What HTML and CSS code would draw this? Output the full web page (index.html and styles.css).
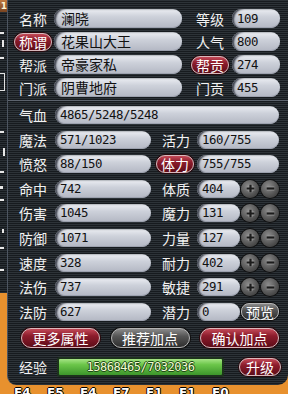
FILE: index.html
```html
<!DOCTYPE html>
<html lang="zh">
<head>
<meta charset="utf-8">
<title>人物属性</title>
<link rel="stylesheet" href="styles.css">
</head>
<body>
<div class="screen">
  <div class="side">
    <span class="side-icon">1</span>
    <i class="mk mk-a"></i>
    <i class="mk mk-b"></i>
    <i class="mk mk-c"></i>
    <i class="mk mk-box"></i>
    <i class="mk mk-d"></i>
    <i class="mk mk-e"></i>
    <i class="mk mk-f"></i>
    <i class="mk mk-g"></i>
    <i class="mk mk-h"></i>
    <i class="mk mk-i"></i>
    <i class="mk mk-j"></i>
    <i class="mk mk-k"></i>
  </div>

  <div class="panel">
    <div class="top">
      <div class="row">
        <span class="lbl">名称</span>
        <span class="fld fld-main">澜晓</span>
        <span class="lbl lbl-top2">等级</span>
        <span class="fld num fld-side">109</span>
      </div>
      <div class="row">
        <span class="lbl"><span class="btn red btn-lbl">称谓</span></span>
        <span class="fld fld-main">花果山大王</span>
        <span class="lbl lbl-top2">人气</span>
        <span class="fld num fld-side">800</span>
      </div>
      <div class="row">
        <span class="lbl">帮派</span>
        <span class="fld fld-main">帝豪家私</span>
        <span class="lbl lbl-top2"><span class="btn red btn-lbl">帮贡</span></span>
        <span class="fld num fld-side">274</span>
      </div>
      <div class="row">
        <span class="lbl">门派</span>
        <span class="fld fld-main">阴曹地府</span>
        <span class="lbl lbl-top2">门贡</span>
        <span class="fld num fld-side">455</span>
      </div>
    </div>

    <div class="divider"></div>

    <div class="stats">
      <div class="row">
        <span class="lbl">气血</span>
        <span class="fld num fld-wide">4865/5248/5248</span>
      </div>
      <div class="row">
        <span class="lbl">魔法</span>
        <span class="fld num fld-left">571/1023</span>
        <span class="lbl lbl-mid2">活力</span>
        <span class="fld num fld-right">160/755</span>
      </div>
      <div class="row">
        <span class="lbl">愤怒</span>
        <span class="fld num fld-left">88/150</span>
        <span class="lbl lbl-mid2 lbl-btn"><span class="btn red btn-lbl">体力</span></span>
        <span class="fld num fld-right">755/755</span>
      </div>
      <div class="row">
        <span class="lbl">命中</span>
        <span class="fld num fld-left">742</span>
        <span class="lbl lbl-mid2">体质</span>
        <span class="fld num fld-short">404</span>
        <span class="pm pm-first"><svg viewBox="0 0 10 10"><path class="pm-hi" d="M5 1.5v7M1.5 5h7"/><path class="pm-sym" d="M5 1.5v7M1.5 5h7"/></svg></span>
        <span class="pm"><svg viewBox="0 0 10 10"><path class="pm-hi" d="M1.5 5h7"/><path class="pm-sym" d="M1.5 5h7"/></svg></span>
      </div>
      <div class="row">
        <span class="lbl">伤害</span>
        <span class="fld num fld-left">1045</span>
        <span class="lbl lbl-mid2">魔力</span>
        <span class="fld num fld-short">131</span>
        <span class="pm pm-first"><svg viewBox="0 0 10 10"><path class="pm-hi" d="M5 1.5v7M1.5 5h7"/><path class="pm-sym" d="M5 1.5v7M1.5 5h7"/></svg></span>
        <span class="pm"><svg viewBox="0 0 10 10"><path class="pm-hi" d="M1.5 5h7"/><path class="pm-sym" d="M1.5 5h7"/></svg></span>
      </div>
      <div class="row">
        <span class="lbl">防御</span>
        <span class="fld num fld-left">1071</span>
        <span class="lbl lbl-mid2">力量</span>
        <span class="fld num fld-short">127</span>
        <span class="pm pm-first"><svg viewBox="0 0 10 10"><path class="pm-hi" d="M5 1.5v7M1.5 5h7"/><path class="pm-sym" d="M5 1.5v7M1.5 5h7"/></svg></span>
        <span class="pm"><svg viewBox="0 0 10 10"><path class="pm-hi" d="M1.5 5h7"/><path class="pm-sym" d="M1.5 5h7"/></svg></span>
      </div>
      <div class="row">
        <span class="lbl">速度</span>
        <span class="fld num fld-left">328</span>
        <span class="lbl lbl-mid2">耐力</span>
        <span class="fld num fld-short">402</span>
        <span class="pm pm-first"><svg viewBox="0 0 10 10"><path class="pm-hi" d="M5 1.5v7M1.5 5h7"/><path class="pm-sym" d="M5 1.5v7M1.5 5h7"/></svg></span>
        <span class="pm"><svg viewBox="0 0 10 10"><path class="pm-hi" d="M1.5 5h7"/><path class="pm-sym" d="M1.5 5h7"/></svg></span>
      </div>
      <div class="row">
        <span class="lbl">法伤</span>
        <span class="fld num fld-left">737</span>
        <span class="lbl lbl-mid2">敏捷</span>
        <span class="fld num fld-short">291</span>
        <span class="pm pm-first"><svg viewBox="0 0 10 10"><path class="pm-hi" d="M5 1.5v7M1.5 5h7"/><path class="pm-sym" d="M5 1.5v7M1.5 5h7"/></svg></span>
        <span class="pm"><svg viewBox="0 0 10 10"><path class="pm-hi" d="M1.5 5h7"/><path class="pm-sym" d="M1.5 5h7"/></svg></span>
      </div>
      <div class="row">
        <span class="lbl">法防</span>
        <span class="fld num fld-left">627</span>
        <span class="lbl lbl-mid2">潜力</span>
        <span class="fld num fld-short">0</span>
        <span class="btn grey btn-preview">预览</span>
      </div>
    </div>

    <div class="actions">
      <span class="btn red btn-act">更多属性</span>
      <span class="btn grey btn-act">推荐加点</span>
      <span class="btn red btn-act">确认加点</span>
    </div>

    <div class="exp">
      <span class="lbl">经验</span>
      <span class="bar">15868465/7032036</span>
      <span class="btn red btn-up">升级</span>
    </div>
  </div>

  <div class="hotkeys">
    <span>F4</span><span>F5</span><span>F4</span><span>F7</span><span>F1</span><span>F1</span><span>F0</span>
  </div>
</div>
</body>
</html>
```

FILE: styles.css
```css
* {
  box-sizing: border-box;
  margin: 0;
  padding: 0;
}

html, body {
  width: 288px;
  height: 394px;
  overflow: hidden;
}

body {
  background: #e8912e;
  font-family: "Noto Sans CJK SC", "Noto Sans", sans-serif;
}

.screen {
  display: grid;
  grid-template-columns: 7px 281px;
  grid-template-rows: 385px 9px;
}

/* left strip: piece of another window behind */
.side {
  grid-column: 1;
  grid-row: 1;
  height: 293px;
  background: linear-gradient(180deg, #2a3035 50%, #15191d 50%) 0 0 / 100% 2px repeat;
  display: flex;
  flex-direction: column;
  align-items: flex-start;
}

.side-icon {
  width: 7px;
  height: 12px;
  background: linear-gradient(#c07a40, #7a4420);
  color: #fff3d0;
  font: bold 9px/12px "DejaVu Sans", sans-serif;
  text-align: right;
  overflow: hidden;
}

.mk {
  display: block;
  background: #e8e8e8;
}
.mk-a { margin-top: 20px; width: 4px; height: 2px; }
.mk-b { margin-top: 6px; width: 2px; height: 7px; margin-left: 2px; }
.mk-c { margin-top: 10px; width: 4px; height: 2px; }
.mk-box { margin-top: 14px; width: 5px; height: 18px; background: transparent; border: 1px solid #e0e0e0; border-left: none; }
.mk-d { margin-top: 40px; width: 4px; height: 2px; }
.mk-e { margin-top: 15px; width: 2px; height: 8px; margin-left: 3px; }
.mk-f { margin-top: 15px; width: 4px; height: 2px; }
.mk-g { margin-top: 13px; width: 3px; height: 3px; }
.mk-h { margin-top: 10px; width: 4px; height: 2px; }
.mk-i { margin-top: 28px; width: 2px; height: 4px; margin-left: 2px; }
.mk-j { margin-top: 14px; width: 4px; height: 2px; }
.mk-k { margin-top: 20px; width: 4px; height: 2px; }

/* main panel */
.panel {
  grid-column: 2;
  grid-row: 1;
  background: linear-gradient(180deg, #2d3338 50%, #171b1f 50%) 0 0 / 100% 2px repeat;
  border-left: 1px solid #4d5561;
  border-radius: 0 0 10px 9px;
  padding: 9px 0 0 5px;
  display: flex;
  flex-direction: column;
}

.top {
  display: flex;
  flex-direction: column;
  gap: 4px;
  flex: none;
}

.divider {
  flex: none;
  height: 1px;
  margin: 3px 0 5px -5px;
  background: #5d646e;
}

.row {
  display: flex;
  align-items: center;
  height: 19px;
}

.stats {
  display: flex;
  flex-direction: column;
  gap: 6.6px;
  flex: none;
}

.stats .row {
  height: 18px;
}

.lbl {
  flex: none;
  width: 40px;
  display: flex;
  justify-content: center;
  align-items: center;
  color: #f2f2f2;
  font-size: 14px;
  line-height: 18px;
}

.lbl-top2 { margin-left: 8px; }
.lbl-mid2 { margin-left: 5px; }
.lbl-btn { justify-content: flex-start; }

/* value fields */
.fld {
  flex: none;
  height: 100%;
  border-radius: 9px;
  background: linear-gradient(180deg, #eceef3 0%, #cdd1da 40%, #b3b7c3 100%);
  box-shadow: inset 3px 1px 2px -1px #3c404b, inset 0 -1px 0 #9ca1ae;
  color: #111;
  font-size: 14px;
  line-height: 19px;
  padding-left: 7px;
  white-space: nowrap;
  overflow: hidden;
}

.stats .fld { line-height: 18px; }

.num {
  font-family: "DejaVu Sans Mono", "Liberation Mono", monospace;
  font-size: 12.4px;
  letter-spacing: -0.46px;
  padding-left: 5px;
}

.fld-main { margin-left: 1px; width: 128px; }
.fld-side { margin-left: 2px; width: 48px; }
.fld-wide { margin-left: 2px; width: 224px; }
.fld-left { margin-left: 2px; width: 96px; }
.fld-right { margin-left: 1px; width: 82px; }
.fld-short { margin-left: 1px; width: 43px; }

/* buttons */
.btn {
  display: flex;
  justify-content: center;
  align-items: center;
  color: #fff;
  font-size: 14px;
  white-space: nowrap;
  flex: none;
}

.red {
  background: linear-gradient(180deg, #c44a58 0%, #8c1c2c 38%, #5e0c18 100%);
  border: 1px solid #d9b8bc;
  box-shadow: 0 0 0 1px #2a0a0e;
}

.grey {
  background: linear-gradient(180deg, #8a8a8a 0%, #555 40%, #2e2e2e 100%);
  border: 1px solid #b4b4b4;
  box-shadow: 0 0 0 1px #101010;
}

.btn-lbl {
  width: 38px;
  height: 18px;
  border-radius: 9px;
  line-height: 16px;
}

.pm {
  flex: none;
  width: 18px;
  height: 18px;
  margin-left: 2px;
  border-radius: 50%;
  background: radial-gradient(circle at 40% 35%, #8a8a8a 0%, #555 55%, #2e2e2e 100%);
  box-shadow: 0 0 0 1px #111;
  display: flex;
  justify-content: center;
  align-items: center;
}

.pm-first { margin-left: 1px; }

.pm svg {
  width: 11px;
  height: 11px;
}

.pm-hi {
  stroke: #9a9a9a;
  stroke-width: 3.6;
  fill: none;
}

.pm-sym {
  stroke: #1c1c1c;
  stroke-width: 2;
  fill: none;
}

.btn-preview {
  margin-left: 1px;
  width: 38px;
  height: 17px;
  border-radius: 8px;
}

.actions {
  display: flex;
  gap: 10.5px;
  margin-top: 7px;
  padding-left: 8px;
  height: 20px;
  flex: none;
}

.btn-act {
  width: 79px;
  height: 20px;
  border-radius: 10px;
}

.exp {
  display: flex;
  align-items: center;
  margin-top: 9px;
  height: 20px;
  flex: none;
}

.bar {
  flex: none;
  margin-left: 4px;
  width: 167px;
  height: 20px;
  border: 2px solid #1d321d;
  border-radius: 3px;
  background: linear-gradient(180deg, #a6e486 0%, #6cc64a 35%, #3c962b 100%);
  color: #f0fcd2;
  font-family: "DejaVu Sans Mono", "Liberation Mono", monospace;
  font-size: 12px;
  letter-spacing: -0.47px;
  line-height: 16px;
  text-align: center;
  text-shadow: 1px 0 0 #1f4a16, -1px 0 0 #1f4a16, 0 1px 0 #1f4a16, 0 -1px 0 #1f4a16;
}

.btn-up {
  margin-left: 15px;
  width: 42px;
  height: 18px;
  border-radius: 9px;
}

/* clipped hotkey labels of the toolbar below */
.hotkeys {
  grid-column: 1 / span 2;
  grid-row: 2;
  height: 9px;
  overflow: hidden;
  display: flex;
  padding-left: 14px;
  padding-top: 1px;
}

.hotkeys span {
  width: 33px;
  color: #fff;
  font: bold 12px/14px "DejaVu Sans", sans-serif;
  text-shadow: 1px 0 0 #000, -1px 0 0 #000, 0 1px 0 #000, 0 -1px 0 #000;
}
```
